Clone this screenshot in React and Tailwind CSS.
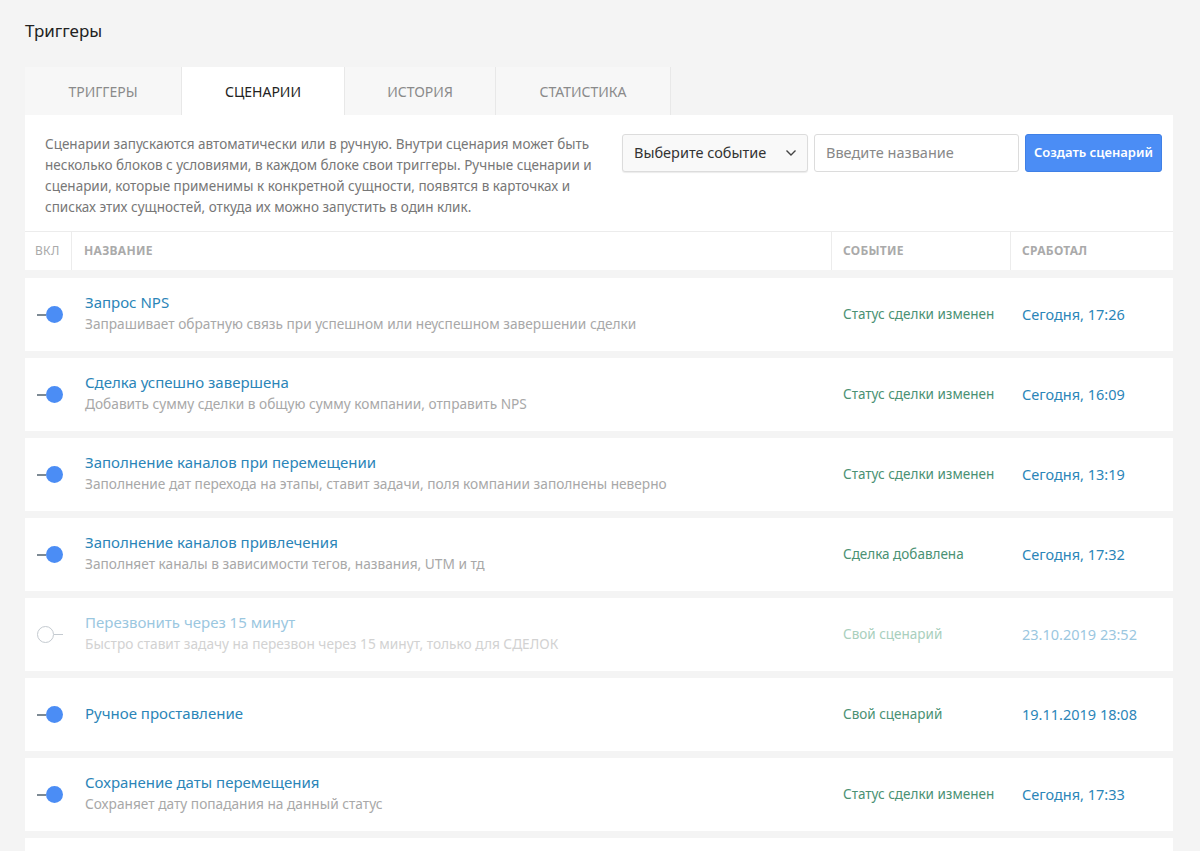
import React from "react";

const rows = [
  { t: "Запрос NPS", d: "Запрашивает обратную связь при успешном или неуспешном завершении сделки", e: "Статус сделки изменен", w: "Сегодня, 17:26", on: true },
  { t: "Сделка успешно завершена", d: "Добавить сумму сделки в общую сумму компании, отправить NPS", e: "Статус сделки изменен", w: "Сегодня, 16:09", on: true },
  { t: "Заполнение каналов при перемещении", d: "Заполнение дат перехода на этапы, ставит задачи, поля компании заполнены неверно", e: "Статус сделки изменен", w: "Сегодня, 13:19", on: true },
  { t: "Заполнение каналов привлечения", d: "Заполняет каналы в зависимости тегов, названия, UTM и тд", e: "Сделка добавлена", w: "Сегодня, 17:32", on: true },
  { t: "Перезвонить через 15 минут", d: "Быстро ставит задачу на перезвон через 15 минут, только для СДЕЛОК", e: "Свой сценарий", w: "23.10.2019 23:52", on: false },
  { t: "Ручное проставление", d: "", e: "Свой сценарий", w: "19.11.2019 18:08", on: true },
  { t: "Сохранение даты перемещения", d: "Сохраняет дату попадания на данный статус", e: "Статус сделки изменен", w: "Сегодня, 17:33", on: true },
];

function Toggle({ on }) {
  if (on) {
    return (
      <div className="flex items-center">
        <div className="w-[9px] h-[2px] bg-[#7d8a94]" />
        <div className="w-[17px] h-[17px] rounded-full bg-[#4b8df5]" />
      </div>
    );
  }
  return (
    <div className="flex items-center">
      <div className="w-[17px] h-[17px] rounded-full border border-[#c4cad0] bg-white" />
      <div className="w-[9px] h-[1px] bg-[#c4cad0]" />
    </div>
  );
}

export default function App() {
  return (
    <div className="min-h-[851px] bg-[#f4f4f4] text-[#333] overflow-hidden" style={{ fontFamily: '"Noto Sans", "Open Sans", sans-serif' }}>
      <div className="pl-[25px] pr-[27px]">
        <div className="h-[67px] flex items-center pb-[6px] text-[17px] text-[#222]">Триггеры</div>
        <div className="flex h-[48px] text-[14px] uppercase">
          <div className="w-[157px] flex items-center justify-center bg-[#f7f7f7] border-r border-[#e8e8e8] text-[#8a8a8a]">Триггеры</div>
          <div className="w-[162px] flex items-center justify-center bg-white text-[#222]">Сценарии</div>
          <div className="w-[152px] flex items-center justify-center bg-[#f7f7f7] border-l border-r border-[#e8e8e8] text-[#8a8a8a]">История</div>
          <div className="w-[175px] flex items-center justify-center bg-[#f7f7f7] border-r border-[#e8e8e8] text-[#8a8a8a]">Статистика</div>
        </div>
        <div className="bg-white flex justify-between pl-[20px] pr-[11px] pt-[19px] pb-[13px]">
          <p className="w-[560px] text-[13.5px] leading-[21px] text-[#777]">
            Сценарии запускаются автоматически или в ручную. Внутри сценария может быть несколько блоков с условиями, в каждом блоке свои триггеры. Ручные сценарии и сценарии, которые применимы к конкретной сущности, появятся в карточках и списках этих сущностей, откуда их можно запустить в один клик.
          </p>
          <div className="flex gap-[6px] h-[38px]">
            <div className="w-[186px] flex items-center justify-between pl-[11px] pr-[10px] bg-[#f9f9f9] border border-[#dcdcdc] rounded-[3px] shadow-[0_1px_1px_rgba(0,0,0,0.08)] text-[14.5px] text-[#333]">
              <span>Выберите событие</span>
              <svg width="12" height="8" viewBox="0 0 12 8" fill="none"><path d="M1.5 1.5 L6 6 L10.5 1.5" stroke="#444" strokeWidth="1.4" /></svg>
            </div>
            <div className="w-[205px] flex items-center pl-[11px] bg-white border border-[#dcdcdc] rounded-[3px] text-[14.5px] text-[#888]">Введите название</div>
            <div className="w-[137px] flex items-center justify-center bg-[#4b8df5] border border-[#3f80e6] rounded-[3px] text-white text-[13px] font-semibold">Создать сценарий</div>
          </div>
        </div>
        <div className="bg-white border-t border-[#ececec] flex h-[39px] text-[12px] font-bold uppercase text-[#aaa] tracking-[0.3px]">
          <div className="w-[47px] flex items-center pl-[10px] border-r border-[#ececec] font-normal">вкл</div>
          <div className="flex-1 flex items-center pl-[12px] border-r border-[#ececec]">Название</div>
          <div className="w-[179px] flex items-center pl-[11px] border-r border-[#ececec]">Событие</div>
          <div className="w-[162px] flex items-center pl-[11px]">Сработал</div>
        </div>
        <div className="flex flex-col gap-[7px] mt-[8px]">
          {rows.map((r, i) => (
            <div key={i} className="bg-white h-[73px] flex items-center">
              <div className="w-[47px] flex items-center pl-[12px]">
                <Toggle on={r.on} />
              </div>
              <div className="flex-1 pl-[13px] pb-[3px] flex flex-col justify-center">
                <div className={"text-[15px] leading-[20px] " + (r.on ? "text-[#2b85b8]" : "text-[#9bc7df]")}>{r.t}</div>
                {r.d && (
                  <div className={"text-[13.7px] leading-[20px] mt-[2px] " + (r.on ? "text-[#a8a8a8]" : "text-[#d2d2d2]")}>{r.d}</div>
                )}
              </div>
              <div className={"w-[179px] pl-[11px] text-[13.5px] " + (r.on ? "text-[#4a9173]" : "text-[#a9cfbd]")}>{r.e}</div>
              <div className={"w-[162px] pl-[11px] text-[14.5px] " + (r.on ? "text-[#2b85b8]" : "text-[#9bc7df]")}>{r.w}</div>
            </div>
          ))}
          <div className="bg-white h-[73px]" />
        </div>
      </div>
    </div>
  );
}
